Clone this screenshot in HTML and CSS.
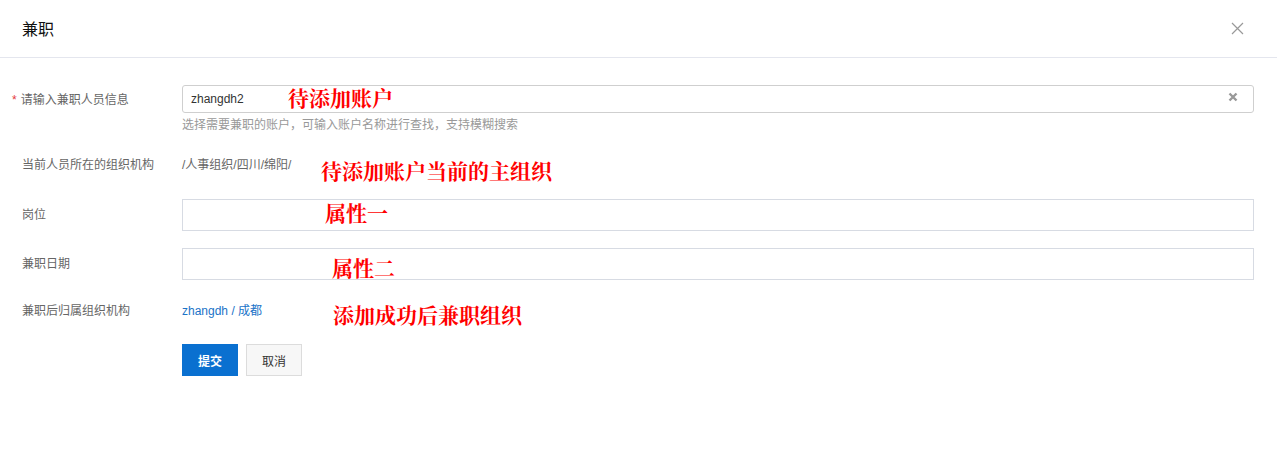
FILE: index.html
```html
<!DOCTYPE html>
<html lang="zh-CN">
<head>
    <meta charset="UTF-8">
    <title>兼职</title>
    <link rel="stylesheet" href="styles.css">
</head>
<body>
    <div class="dialog">
        <div class="dialog-header">
            <div class="dialog-title">兼职</div>
            <span class="dialog-close">
                <svg width="13" height="13" viewBox="0 0 13 13"><path d="M1 1L12 12M12 1L1 12" stroke="#999" stroke-width="1.2" fill="none"/></svg>
            </span>
        </div>

        <div class="form">
            <div class="form-row row-account">
                <div class="form-label"><span class="required">*</span>请输入兼职人员信息</div>
                <div class="form-field">
                    <div class="input input-round">
                        <span class="input-value">zhangdh2</span>
                        <span class="input-clear">
                            <svg width="10" height="10" viewBox="0 0 10 10"><path d="M1.5 1.5L8.5 8.5M8.5 1.5L1.5 8.5" stroke="#999" stroke-width="2.4" fill="none"/></svg>
                        </span>
                    </div>
                    <div class="form-help">选择需要兼职的账户，可输入账户名称进行查找，支持模糊搜索</div>
                </div>
                <span class="note note-account">待添加账户</span>
            </div>

            <div class="form-row row-org">
                <div class="form-label">当前人员所在的组织机构</div>
                <div class="form-field form-text">/人事组织/四川/绵阳/</div>
                <span class="note note-org">待添加账户当前的主组织</span>
            </div>

            <div class="form-row row-post">
                <div class="form-label">岗位</div>
                <div class="form-field"><div class="input"></div></div>
                <span class="note note-post">属性一</span>
            </div>

            <div class="form-row row-date">
                <div class="form-label">兼职日期</div>
                <div class="form-field"><div class="input"></div></div>
                <span class="note note-date">属性二</span>
            </div>

            <div class="form-row row-target">
                <div class="form-label">兼职后归属组织机构</div>
                <div class="form-field form-text"><a class="link" href="#">zhangdh / 成都</a></div>
                <span class="note note-target">添加成功后兼职组织</span>
            </div>

            <div class="form-actions">
                <button class="btn btn-primary">提交</button>
                <button class="btn">取消</button>
            </div>
        </div>
    </div>
</body>
</html>
```

FILE: styles.css
```css
body {
    margin: 0;
    background-color: #fff;
    font-family: "Liberation Sans", "Noto Sans CJK SC", sans-serif;
    font-size: 12px;
    color: #333;
}

.dialog-header {
    height: 57px;
    border-bottom: 1px solid #e4e6ee;
    display: flex;
    align-items: center;
    justify-content: space-between;
    padding: 0 33px 0 22px;
}

.dialog-title {
    font-size: 16px;
    font-weight: 400;
    color: #111;
    padding-bottom: 2px;
}

.dialog-close {
    display: flex;
    padding-bottom: 1px;
}

.form {
    padding-top: 27px;
}

.form-row {
    display: flex;
    position: relative;
}

.form-label {
    width: 160px;
    padding-left: 22px;
    line-height: 32px;
    color: #666;
    flex-shrink: 0;
}

.required {
    color: #e4393c;
    margin-left: -10px;
    margin-right: 4px;
}

.form-field {
    flex: 1;
    margin-right: 23px;
}

.form-text {
    line-height: 32px;
    color: #666;
}

.row-account {
    margin-bottom: 16px;
}

.row-account .form-label {
    line-height: 30px;
}

.row-org {
    margin-bottom: 18px;
}

.row-post {
    margin-bottom: 17px;
}

.row-date {
    margin-bottom: 15px;
}

.row-target {
    margin-bottom: 17px;
}

.input {
    border: 1px solid #d7dbe3;
    box-sizing: border-box;
    height: 32px;
}

.input-round {
    height: 28px;
    border-color: #cfcfcf;
    border-radius: 3px;
    display: flex;
    align-items: center;
    justify-content: space-between;
    padding: 0 15px 0 8px;
}

.input-value {
    color: #333;
}

.input-clear {
    display: flex;
    margin-top: -4px;
}

.form-help {
    margin-top: 4px;
    line-height: 16px;
    color: #999;
}

.link {
    color: #1a73c8;
    text-decoration: none;
}

.note {
    position: absolute;
    color: #f00;
    font-family: "Noto Serif CJK SC", "Noto Sans CJK SC", serif;
    font-weight: 700;
    font-size: 21px;
    line-height: 24px;
    white-space: nowrap;
}

.note-account {
    left: 288px;
    top: 0;
}

.note-org {
    left: 321px;
    top: 9px;
}

.note-post {
    left: 325px;
    top: 1px;
}

.note-date {
    left: 332px;
    top: 7px;
}

.note-target {
    left: 333px;
    top: 7px;
}

.form-actions {
    display: flex;
    gap: 8px;
    padding-left: 182px;
}

.btn {
    width: 56px;
    height: 32px;
    border: 1px solid #dcdcdc;
    background-color: #f7f7f7;
    color: #333;
    font-family: inherit;
    font-size: 12px;
    padding: 0;
    cursor: pointer;
}

.btn-primary {
    background-color: #0a70d0;
    border-color: #0a70d0;
    color: #fff;
    font-weight: 700;
}
```
